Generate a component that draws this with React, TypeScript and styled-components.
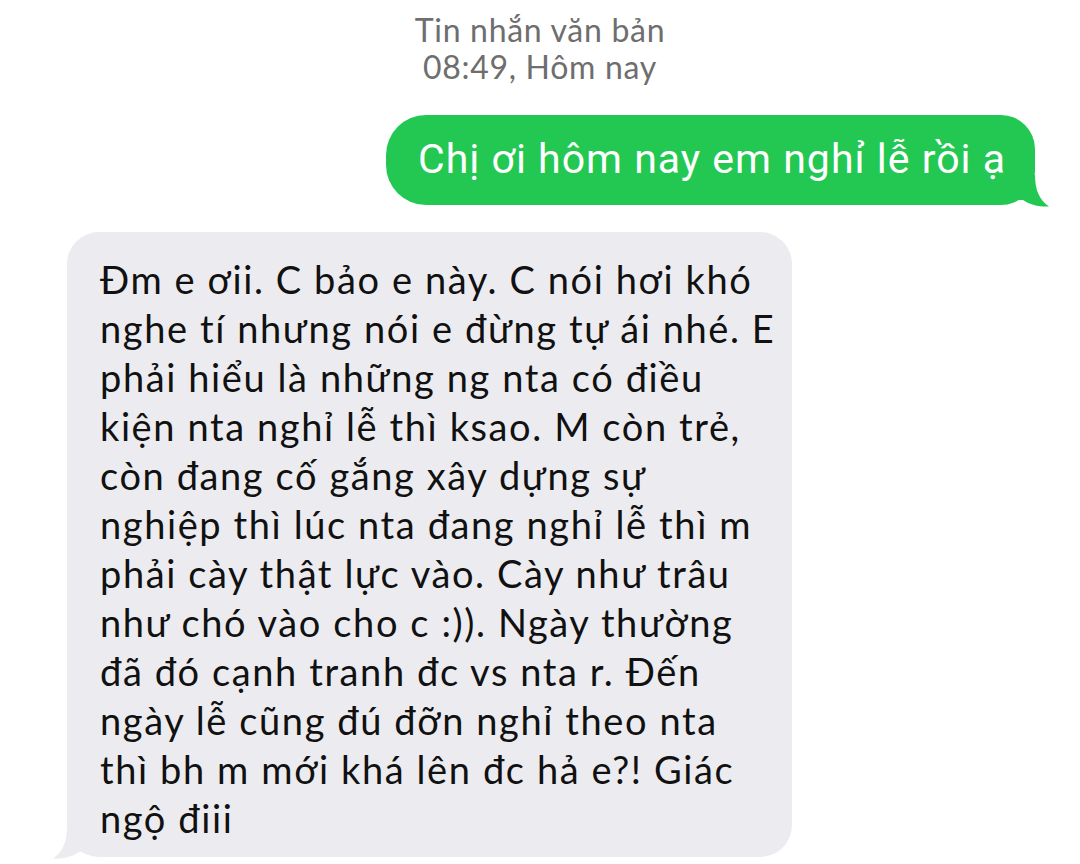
import React from "react";
import styled, { createGlobalStyle } from "styled-components";

const Global = createGlobalStyle`
  html, body { margin: 0; padding: 0; background: #ffffff; }
  body { width: 1080px; height: 864px; overflow: hidden; }
`;

const Page = styled.div`
  width: 1080px;
  height: 864px;
  display: flex;
  flex-direction: column;
  background: #ffffff;
`;

const Header = styled.div`
  display: flex;
  flex-direction: column;
  align-items: center;
  padding-top: 11px;
  font-family: "Lato", "Noto Sans", sans-serif;
  font-size: 32px;
  letter-spacing: 0.7px;
  line-height: 37px;
  color: #6e6e6e;
`;

const Row = styled.div<{ $side: "left" | "right" }>`
  display: flex;
  justify-content: ${(p) => (p.$side === "right" ? "flex-end" : "flex-start")};
`;

const OutRow = styled(Row)`
  padding-top: 30px;
  padding-right: 45px;
`;

const InRow = styled(Row)`
  padding-top: 27px;
  padding-left: 67px;
`;

const Bubble = styled.div<{ $tone: "green" | "gray" }>`
  position: relative;
  white-space: pre-line;
  background: ${(p) => (p.$tone === "green" ? "#23c853" : "#ececf0")};
  color: ${(p) => (p.$tone === "green" ? "#ffffff" : "#111111")};
`;

const OutBubble = styled(Bubble)`
  border-radius: 40px 34px 34px 40px;
  padding: 21px 29px 22px 32px;
  font-family: "Roboto", sans-serif;
  font-size: 41px;
  letter-spacing: 1px;
  line-height: 47px;
`;

const InBubble = styled(Bubble)`
  width: 725px;
  box-sizing: border-box;
  border-radius: 32px;
  padding: 23px 10px 14px 33px;
  font-family: "Lato", "Noto Sans", sans-serif;
  font-size: 38px;
  letter-spacing: 1.6px;
  line-height: 49px;
`;

const Tail = styled.svg<{ $side: "left" | "right" }>`
  position: absolute;
  bottom: -2px;
  width: 32px;
  height: 32px;
  ${(p) => (p.$side === "right" ? "right: -15px;" : "left: -15px; transform: scaleX(-1);")}
`;

const TailShape = ({ side, color }: { side: "left" | "right"; color: string }) => (
  <Tail $side={side} viewBox="0 0 32 32">
    <path d="M0 0 H17 C17 14 21 25 31 31.5 C22 32 12 30 5 25 L0 25 Z" fill={color} />
  </Tail>
);

const incoming = `Đm e ơii. C bảo e này. C nói hơi khó
nghe tí nhưng nói e đừng tự ái nhé. E
phải hiểu là những ng nta có điều
kiện nta nghỉ lễ thì ksao. M còn trẻ,
còn đang cố gắng xây dựng sự
nghiệp thì lúc nta đang nghỉ lễ thì m
phải cày thật lực vào. Cày như trâu
như chó vào cho c :)). Ngày thường
đã đó cạnh tranh đc vs nta r. Đến
ngày lễ cũng đú đỡn nghỉ theo nta
thì bh m mới khá lên đc hả e?! Giác
ngộ điii`;

export default function App() {
  return (
    <Page>
      <Global />
      <Header>
        <span>Tin nhắn văn bản</span>
        <span>08:49, Hôm nay</span>
      </Header>
      <OutRow $side="right">
        <OutBubble $tone="green">
          Chị ơi hôm nay em nghỉ lễ rồi ạ
          <TailShape side="right" color="#23c853" />
        </OutBubble>
      </OutRow>
      <InRow $side="left">
        <InBubble $tone="gray">
          {incoming}
          <TailShape side="left" color="#ececf0" />
        </InBubble>
      </InRow>
    </Page>
  );
}
